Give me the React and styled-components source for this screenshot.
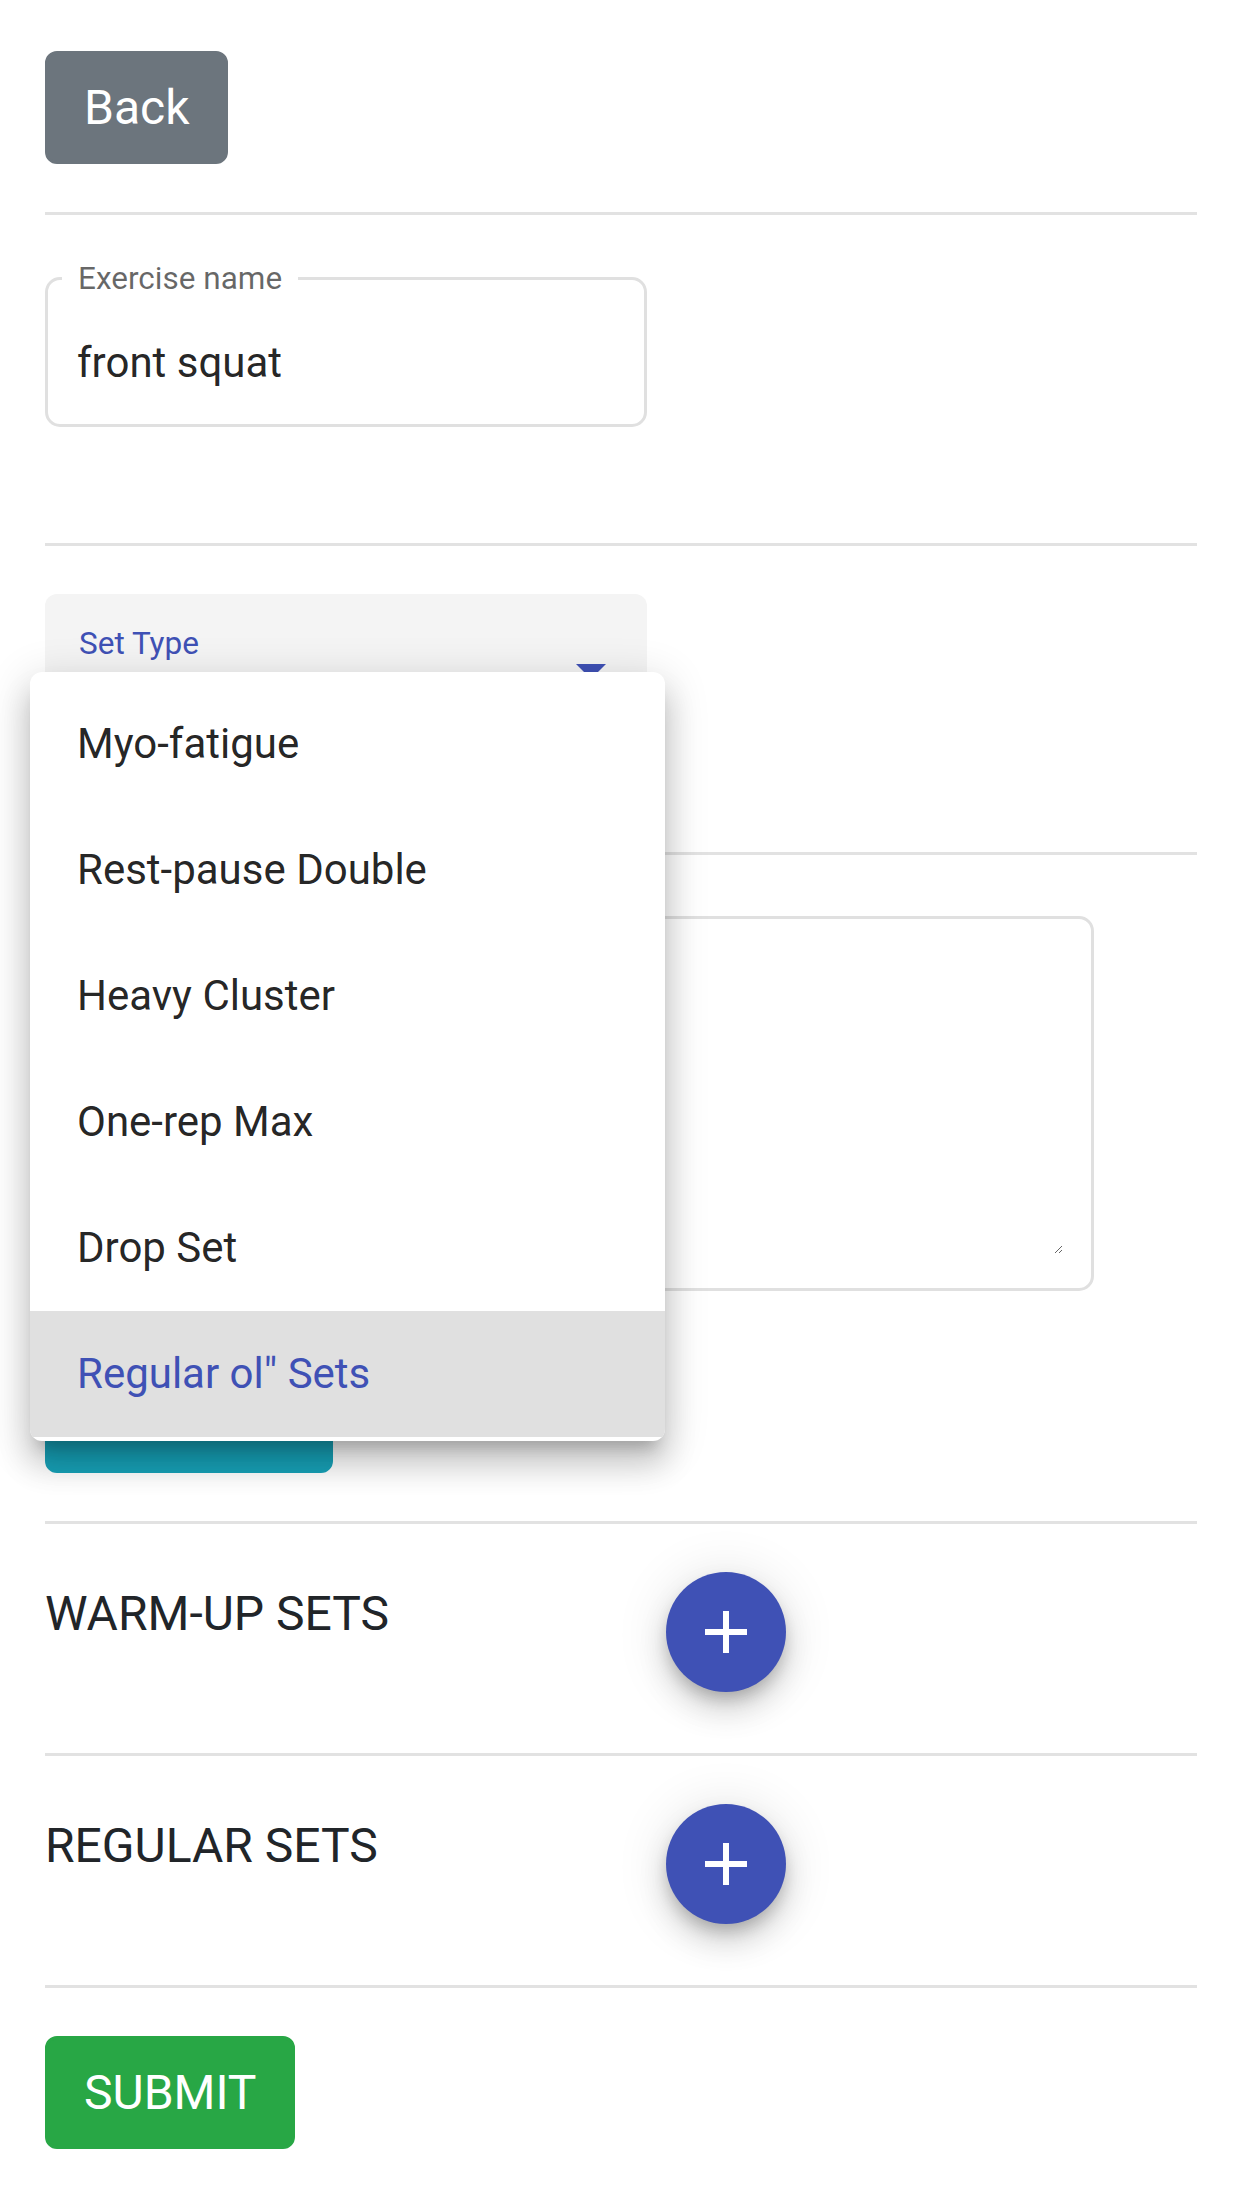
import React from "react";
import styled, { createGlobalStyle } from "styled-components";

const GlobalStyle = createGlobalStyle`
  html, body {
    margin: 0;
    padding: 0;
    background: #ffffff;
  }
  body {
    font-family: Roboto, "Noto Sans", "Liberation Sans", sans-serif;
    color: #212529;
  }
  * { box-sizing: border-box; }
`;

const Page = styled.div`
  width: 1242px;
  min-height: 2208px;
  padding: 51px 45px 0;
  background: #ffffff;
`;

const Button = styled.button`
  display: inline-block;
  height: 113px;
  padding: 0 36px;
  border: 3px solid ${(p) => p.$bg};
  border-radius: 12px;
  font-family: Roboto, "Liberation Sans", sans-serif;
  font-size: 48px;
  font-weight: 400;
  line-height: 107px;
  color: #ffffff;
  background: ${(p) => p.$bg};
  cursor: pointer;
`;

const InfoButton = styled(Button)`
  width: 288px;
  vertical-align: top;
`;

const Divider = styled.hr`
  height: 3px;
  border: none;
  background: #e2e2e2;
  margin: 48px 0;
`;

const Section = styled.div`
  padding-top: ${(p) => p.$top || 0}px;
  padding-bottom: ${(p) => p.$bottom || 0}px;
`;

const Outline = styled.fieldset`
  width: 602px;
  margin: 0;
  padding: 0;
  border: 3px solid #e0e0e0;
  border-radius: 15px;
`;

const Legend = styled.legend`
  margin-left: 14px;
  padding: 0 16px;
  font-size: 31.5px;
  line-height: 31px;
  color: rgba(0, 0, 0, 0.6);
`;

const ValueText = styled.div`
  padding: 39px 30px 31px 29px;
  font-size: 42px;
  line-height: 60px;
  color: rgba(0, 0, 0, 0.87);
`;

const SelectWrap = styled.div`
  position: relative;
  width: 602px;
`;

const SelectBox = styled.div`
  position: relative;
  height: 152px;
  background: #f4f4f4;
  border-radius: 12px 12px 0 0;
  padding: 30px 34px 0;
`;

const SelectLabel = styled.div`
  font-size: 31.5px;
  line-height: 40px;
  color: #3f51b5;
`;

const ArrowIcon = styled.svg`
  position: absolute;
  right: 20px;
  top: 40px;
  width: 72px;
  height: 72px;
  fill: #3f51b5;
`;

const Menu = styled.ul`
  position: absolute;
  top: 78px;
  left: -15px;
  width: 635px;
  margin: 0;
  padding: 9px 0 4px;
  list-style: none;
  background: #ffffff;
  border-radius: 12px;
  overflow: hidden;
  z-index: 10;
  box-shadow: 0 15px 15px -9px rgba(0, 0, 0, 0.2),
    0 24px 30px 3px rgba(0, 0, 0, 0.14), 0 9px 42px 6px rgba(0, 0, 0, 0.12);
`;

const MenuItem = styled.li`
  height: 126px;
  padding: 0 47px;
  font-size: 42px;
  line-height: 126px;
  color: ${(p) => (p.$selected ? "#3f51b5" : "rgba(0, 0, 0, 0.87)")};
  background: ${(p) => (p.$selected ? "#e0e0e0" : "transparent")};
`;

const NotesBox = styled.div`
  width: 1049px;
  border: 3px solid #e0e0e0;
  border-radius: 15px;
  padding: 30px 28px 34px 42px;
`;

const NotesArea = styled.textarea`
  display: block;
  width: 100%;
  height: 305px;
  border: none;
  outline: none;
  background: transparent;
  resize: vertical;
  font-family: Roboto, "Liberation Sans", sans-serif;
  font-size: 42px;
  color: rgba(0, 0, 0, 0.87);
`;

const SetRow = styled.div`
  display: grid;
  grid-template-columns: 1fr 1fr;
  column-gap: 90px;
  align-items: start;
  padding-bottom: 13px;
`;

const SetTitle = styled.h5`
  margin: 0;
  padding-top: 6px;
  font-size: 48px;
  font-weight: 400;
  line-height: 72px;
  color: #212529;
  text-transform: uppercase;
`;

const Fab = styled.button`
  width: 120px;
  height: 120px;
  border-radius: 50%;
  border: none;
  padding: 0;
  display: flex;
  align-items: center;
  justify-content: center;
  background: #3f51b5;
  box-shadow: 0 9px 15px -3px rgba(0, 0, 0, 0.2),
    0 18px 30px 0 rgba(0, 0, 0, 0.14), 0 3px 54px 0 rgba(0, 0, 0, 0.12);
  cursor: pointer;
`;

const PlusIcon = styled.svg`
  width: 72px;
  height: 72px;
  fill: #ffffff;
`;

const options = [
  "Myo-fatigue",
  "Rest-pause Double",
  "Heavy Cluster",
  "One-rep Max",
  "Drop Set",
  'Regular ol" Sets',
];

function SetSection({ title }) {
  return (
    <SetRow>
      <SetTitle>{title}</SetTitle>
      <div>
        <Fab aria-label="add">
          <PlusIcon viewBox="0 0 24 24">
            <path d="M19 13h-6v6h-2v-6H5v-2h6V5h2v6h6v2z" />
          </PlusIcon>
        </Fab>
      </div>
    </SetRow>
  );
}

export default function App() {
  return (
    <>
      <GlobalStyle />
      <Page>
        <Button $bg="#6c757d">Back</Button>
        <Divider />
        <Section $bottom={68}>
          <Outline>
            <Legend>Exercise name</Legend>
            <ValueText>front squat</ValueText>
          </Outline>
        </Section>
        <Divider />
        <Section $bottom={58}>
          <SelectWrap>
            <SelectBox>
              <SelectLabel>Set Type</SelectLabel>
              <ArrowIcon viewBox="0 0 24 24">
                <path d="M7 10l5 5 5-5z" />
              </ArrowIcon>
            </SelectBox>
            <Menu>
              {options.map((o, i) => (
                <MenuItem key={o} $selected={i === options.length - 1}>
                  {o}
                </MenuItem>
              ))}
            </Menu>
          </SelectWrap>
        </Section>
        <Divider />
        <Section $top={13} $bottom={69}>
          <NotesBox>
            <NotesArea defaultValue="" />
          </NotesBox>
        </Section>
        <InfoButton $bg="#17a2b8" aria-label="Notes" />
        <Divider />
        <SetSection title="Warm-up Sets" />
        <Divider />
        <SetSection title="Regular Sets" />
        <Divider />
        <Button $bg="#28a745">SUBMIT</Button>
      </Page>
    </>
  );
}
